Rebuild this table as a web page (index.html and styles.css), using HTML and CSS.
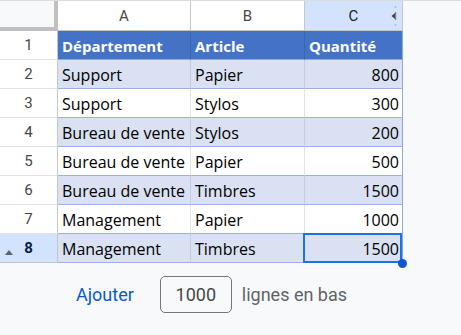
FILE: index.html
```html
<!DOCTYPE html>
<html lang="fr">
<head>
<meta charset="utf-8">
<title>Feuille</title>
<link rel="stylesheet" href="styles.css">
</head>
<body>
<div class="sheet">
  <div class="grid">
    <div class="corner"></div>
    <div class="colhead">A</div>
    <div class="colhead">B</div>
    <div class="colhead colsel">C
      <svg class="collapse" width="20" height="30" viewBox="0 0 20 30" aria-hidden="true">
        <circle cx="13.5" cy="6" r="0.8" fill="#9aa0a6"/>
        <circle cx="13.5" cy="24" r="0.8" fill="#9aa0a6"/>
        <path d="M9.5 15 L13.5 11.5 L13.5 18.5 Z" fill="#444746"/>
        <rect x="13" y="11" width="1.2" height="8" fill="#7a7d80"/>
      </svg>
    </div>

    <div class="rowhead">1</div>
    <div class="cell th">Département</div>
    <div class="cell th">Article</div>
    <div class="cell th last">Quantité</div>

    <div class="rowhead">2</div>
    <div class="cell band">Support</div>
    <div class="cell band">Papier</div>
    <div class="cell band num last">800</div>

    <div class="rowhead">3</div>
    <div class="cell">Support</div>
    <div class="cell">Stylos</div>
    <div class="cell num last">300</div>

    <div class="rowhead">4</div>
    <div class="cell band">Bureau de vente</div>
    <div class="cell band">Stylos</div>
    <div class="cell band num last">200</div>

    <div class="rowhead">5</div>
    <div class="cell">Bureau de vente</div>
    <div class="cell">Papier</div>
    <div class="cell num last">500</div>

    <div class="rowhead">6</div>
    <div class="cell band">Bureau de vente</div>
    <div class="cell band">Timbres</div>
    <div class="cell band num last">1500</div>

    <div class="rowhead">7</div>
    <div class="cell">Management</div>
    <div class="cell">Papier</div>
    <div class="cell num last">1000</div>

    <div class="rowhead rowsel"><span class="uptri"></span>8</div>
    <div class="cell band">Management</div>
    <div class="cell band">Timbres</div>
    <div class="cell band num last active">1500<span class="handle"></span></div>
  </div>
</div>
<div class="footer">
  <span class="add">Ajouter</span>
  <span class="count">1000</span>
  <span class="label">lignes en bas</span>
</div>
</body>
</html>
```

FILE: styles.css
```css
* { box-sizing: border-box; }

html, body {
  margin: 0;
  padding: 0;
  background: #f8f9fa;
  width: 461px;
  height: 335px;
  overflow: hidden;
}

.sheet {
  border-top: 1px solid #dadce0;
}

.grid {
  display: grid;
  grid-template-columns: 58px 133px 114px 98px;
  grid-template-rows: 30px repeat(8, 29px);
  width: 403px;
  background: #ffffff;
}

.corner {
  background: #f8f9fa;
  border-right: 4px solid #c0c0c0;
  border-bottom: 4px solid #c0c0c0;
}

.colhead {
  position: relative;
  display: flex;
  align-items: center;
  justify-content: center;
  font-family: Roboto, "Liberation Sans", sans-serif;
  font-size: 15px;
  color: #444746;
  background: #ffffff;
  border-right: 1px solid #c4c7c5;
  border-bottom: 1px solid #c4c7c5;
  padding-top: 1px;
}

.colsel {
  background: #d3e3fd;
  color: #1f1f1f;
}

.collapse {
  position: absolute;
  right: 0;
  top: 0;
}

.rowhead {
  position: relative;
  display: flex;
  align-items: center;
  justify-content: center;
  font-family: Roboto, "Liberation Sans", sans-serif;
  font-size: 15px;
  color: #444746;
  background: #ffffff;
  border-right: 1px solid #c4c7c5;
  border-bottom: 1px solid #e1e3e1;
}

.rowsel {
  background: #d3e3fd;
  color: #041e49;
  font-weight: 700;
  border-bottom: 1px solid #c4c7c5;
}

.uptri {
  position: absolute;
  left: 5px;
  top: 16px;
  width: 0;
  height: 0;
  border-left: 4px solid transparent;
  border-right: 4px solid transparent;
  border-bottom: 5px solid #5f6368;
}

.cell {
  position: relative;
  display: flex;
  align-items: center;
  padding: 1px 3px 0 4px;
  font-family: "Open Sans", "Noto Sans", sans-serif;
  font-size: 16px;
  color: #000000;
  white-space: nowrap;
  border-right: 1px solid #e2e2e2;
  border-bottom: 1px solid #9bb2e0;
}

.band {
  background: #d9e1f2;
  border-right-color: #c5cddd;
}

.th {
  background: #4472c4;
  color: #ffffff;
  font-weight: 700;
  font-size: 15px;
  border-right-color: #3d66b0;
  border-bottom-color: #8eaadb;
}

.num {
  justify-content: flex-end;
}

.last {
  border-right-color: #8eaadb;
}

.active::after {
  content: "";
  position: absolute;
  top: -1px;
  left: -2px;
  right: 0;
  bottom: -1px;
  border: 2px solid #1a73e8;
  pointer-events: none;
}

.handle {
  position: absolute;
  right: -5px;
  bottom: -6px;
  width: 9px;
  height: 9px;
  border-radius: 50%;
  background: #0b57d0;
  z-index: 2;
}

.footer {
  display: flex;
  align-items: center;
  padding: 13px 0 0 76px;
  font-family: Roboto, "Liberation Sans", sans-serif;
  font-size: 18px;
}

.add {
  color: #0b57d0;
  font-weight: 400;
  margin-right: 26px;
}

.count {
  display: flex;
  align-items: center;
  justify-content: center;
  width: 72px;
  height: 37px;
  border: 1px solid #747775;
  border-radius: 5px;
  color: #444746;
  background: #f8f9fa;
  margin-right: 10px;
}

.label {
  color: #5f6368;
}
```
